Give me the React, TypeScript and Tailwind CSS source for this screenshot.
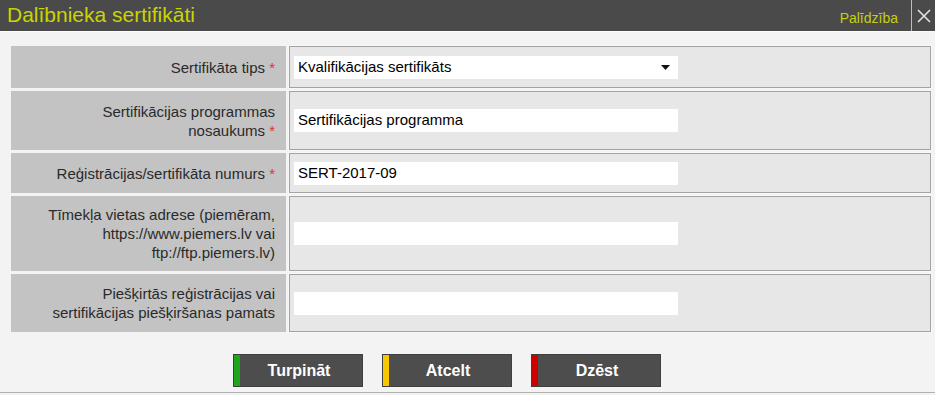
import React from "react";

const font = { fontFamily: '"Liberation Sans", Arial, sans-serif' };

function Label({ children }: { children: React.ReactNode }) {
  return (
    <div className="bg-[#c3c3c3] flex items-center justify-end text-right pr-[11px] pl-4 text-[15px] leading-[19px] text-[#2a2a2a]">
      <div>{children}</div>
    </div>
  );
}

function Req() {
  return <span className="text-[#d9363e]"> *</span>;
}

function Value({ children }: { children?: React.ReactNode }) {
  return (
    <div className="bg-[#e7e7e7] border border-[#a3a3a3] shadow-[0_0_0_1px_#f8f8f8] flex items-center pl-[4px]">
      {children}
    </div>
  );
}

function TextBox({ value }: { value?: string }) {
  return (
    <div className="w-[384px] h-[23px] bg-white flex items-center pl-[4px] text-[15px] text-black">
      {value}
    </div>
  );
}

function Btn({ label, color }: { label: string; color: string }) {
  return (
    <div className="w-[130px] h-[33px] bg-[#4d4d4d] flex border border-[#3f3f3f]">
      <div className={`w-[6px] h-full ${color}`} />
      <div className="flex-1 flex items-center justify-center text-white font-bold text-[16px] pr-[4px]">
        {label}
      </div>
    </div>
  );
}

export default function App() {
  return (
    <div style={font} className="w-[935px] h-[395px] bg-[#f3f3f3] flex flex-col overflow-hidden">
      <div className="h-[32px] bg-[#4a4a4a] flex items-stretch border-b border-[#fafafa]">
        <div className="flex-1 pl-[7px] flex items-center text-[21px] text-[#c9d500] leading-none pb-[2px]">
          Dalībnieka sertifikāti
        </div>
        <div className="flex items-center text-[14px] text-[#c4cf10] pr-[13px] pt-[5px]">Palīdzība</div>
        <div className="w-px bg-[#bdbdbd]" />
        <div className="w-[23px] flex items-center justify-center">
          <svg width="16" height="16" viewBox="0 0 16 16">
            <path d="M2 2 L14 14 M14 2 L2 14" stroke="#e2e2e2" strokeWidth="1.6" />
          </svg>
        </div>
      </div>

      <div className="grid grid-cols-[275px_642px] gap-x-[3px] gap-y-[3px] pl-[11px] mt-[14px] grid-rows-[42px_59px_40px_75px_58px]">
        <Label>
          Sertifikāta tips<Req />
        </Label>
        <Value>
          <div className="w-[384px] h-[23px] bg-white flex items-center justify-between pl-[4px] pr-[8px] text-[15px] text-black">
            <span>Kvalifikācijas sertifikāts</span>
            <svg width="9" height="5" viewBox="0 0 9 5">
              <path d="M0 0 H9 L4.5 5 Z" fill="#111" />
            </svg>
          </div>
        </Value>

        <Label>
          Sertifikācijas programmas
          <br />
          nosaukums<Req />
        </Label>
        <Value>
          <TextBox value="Sertifikācijas programma" />
        </Value>

        <Label>
          Reģistrācijas/sertifikāta numurs<Req />
        </Label>
        <Value>
          <TextBox value="SERT-2017-09" />
        </Value>

        <Label>
          Tīmekļa vietas adrese (piemēram,
          <br />
          https://www.piemers.lv vai
          <br />
          ftp://ftp.piemers.lv)
        </Label>
        <Value>
          <TextBox />
        </Value>

        <Label>
          Piešķirtās reģistrācijas vai
          <br />
          sertifikācijas piešķiršanas pamats
        </Label>
        <Value>
          <TextBox />
        </Value>
      </div>

      <div className="flex gap-[19px] pl-[233px] mt-[22px]">
        <Btn label="Turpināt" color="bg-[#1ea51e]" />
        <Btn label="Atcelt" color="bg-[#f6c800]" />
        <Btn label="Dzēst" color="bg-[#cc0000]" />
      </div>
      <div className="mt-[5px] h-px bg-[#b0b0b0]" />
    </div>
  );
}
